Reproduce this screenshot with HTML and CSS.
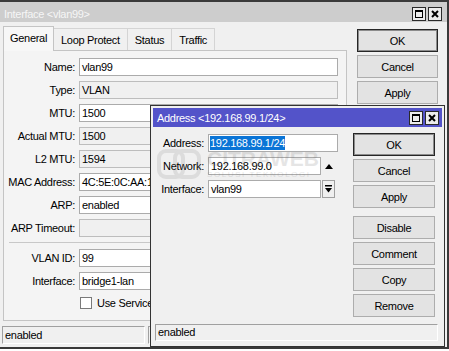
FILE: index.html
```html
<!DOCTYPE html>
<html lang="en">
<head>
    <meta charset="UTF-8">
    <meta name="viewport" content="width=device-width, initial-scale=1.0">
    <title>Interface &lt;vlan99&gt;</title>
    <link rel="stylesheet" href="styles.css">
</head>
<body>
    <div class="win">
        <div class="titlebar">
            <span class="title">Interface &lt;vlan99&gt;</span>
            <div class="tb-buttons">
                <span class="tb-btn">
                    <svg width="14" height="14" viewBox="0 0 14 14"><rect x="0.5" y="0.5" width="13" height="13" fill="#ececec" stroke="#2a2a2a"/><rect x="3.5" y="3.5" width="7" height="7" fill="none" stroke="#000"/><line x1="3" y1="4" x2="11" y2="4" stroke="#000" stroke-width="2"/></svg>
                </span>
                <span class="tb-btn">
                    <svg width="14" height="14" viewBox="0 0 14 14"><rect x="0.5" y="0.5" width="13" height="13" fill="#ececec" stroke="#2a2a2a"/><path d="M4 4 L10 10 M10 4 L4 10" stroke="#000" stroke-width="2"/></svg>
                </span>
            </div>
        </div>

        <div class="win-body">
            <div class="main">
                <div class="tabs">
                    <div class="tab active">General</div>
                    <div class="tab">Loop Protect</div>
                    <div class="tab">Status</div>
                    <div class="tab">Traffic</div>
                </div>
                <div class="panel">
                    <div class="row"><label>Name:</label><div class="field">vlan99</div></div>
                    <div class="row"><label>Type:</label><div class="field ro">VLAN</div></div>
                    <div class="row"><label>MTU:</label><div class="field">1500</div></div>
                    <div class="row"><label>Actual MTU:</label><div class="field ro">1500</div></div>
                    <div class="row"><label>L2 MTU:</label><div class="field ro">1594</div></div>
                    <div class="row"><label>MAC Address:</label><div class="field">4C:5E:0C:AA:1B:2C</div></div>
                    <div class="row"><label>ARP:</label><div class="field">enabled</div></div>
                    <div class="row"><label>ARP Timeout:</label><div class="field ro"></div></div>
                    <div class="sep"></div>
                    <div class="row"><label>VLAN ID:</label><div class="field">99</div></div>
                    <div class="row"><label>Interface:</label><div class="field">bridge1-lan</div></div>
                    <div class="check-row"><span class="checkbox"></span><span>Use Service Tag</span></div>
                </div>
            </div>
            <div class="side">
                <button class="btn default">OK</button>
                <button class="btn">Cancel</button>
                <button class="btn">Apply</button>
            </div>
        </div>

        <div class="statusbar">
            <div class="status-cell">enabled</div>
            <div class="status-cell"></div>
        </div>
    </div>

    <div class="dialog">
        <div class="dlg-title">
            <span>Address &lt;192.168.99.1/24&gt;</span>
            <div class="tb-buttons">
                <span class="tb-btn">
                    <svg width="14" height="14" viewBox="0 0 14 14"><rect x="0.5" y="0.5" width="13" height="13" fill="#ececec" stroke="#2a2a2a"/><rect x="3.5" y="3.5" width="7" height="7" fill="none" stroke="#000"/><line x1="3" y1="4" x2="11" y2="4" stroke="#000" stroke-width="2"/></svg>
                </span>
                <span class="tb-btn">
                    <svg width="14" height="14" viewBox="0 0 14 14"><rect x="0.5" y="0.5" width="13" height="13" fill="#ececec" stroke="#2a2a2a"/><path d="M4 4 L10 10 M10 4 L4 10" stroke="#000" stroke-width="2"/></svg>
                </span>
            </div>
        </div>

        <div class="dlg-body">
            <div class="dlg-form">
                <div class="row">
                    <label class="dlg-label">Address:</label>
                    <div class="field addr"><span class="sel">192.168.99.1/24</span></div>
                </div>
                <div class="row">
                    <label class="dlg-label">Network:</label>
                    <div class="field short">192.168.99.0</div>
                    <span class="spin">
                        <svg width="8" height="5" viewBox="0 0 8 5"><polygon points="0,5 8,5 4,0" fill="#000"/></svg>
                    </span>
                </div>
                <div class="row">
                    <label class="dlg-label">Interface:</label>
                    <div class="field short">vlan99</div>
                    <span class="dd-btn">
                        <svg width="7" height="8" viewBox="0 0 7 8"><rect x="0" y="0" width="7" height="1.5" fill="#000"/><polygon points="0,3 7,3 3.5,7.5" fill="#000"/></svg>
                    </span>
                </div>
            </div>
            <div class="dlg-side">
                <button class="btn wide default">OK</button>
                <button class="btn wide">Cancel</button>
                <button class="btn wide">Apply</button>
                <button class="btn wide group">Disable</button>
                <button class="btn wide">Comment</button>
                <button class="btn wide">Copy</button>
                <button class="btn wide">Remove</button>
            </div>
        </div>

        <div class="dlg-status">enabled</div>
    </div>

    <!-- watermark from the screenshot source -->
    <div class="watermark">
        <svg width="44" height="30" viewBox="0 0 44 30"><rect x="2" y="2" width="24" height="26" rx="7" fill="none" stroke="#777" stroke-width="4"/><rect x="18" y="2" width="24" height="26" rx="7" fill="none" stroke="#777" stroke-width="4"/></svg>
        <div class="wm-text">
            <div class="wm-big">CITRAWEB</div>
            <div class="wm-small">SOLUSI TEKNOLOGI</div>
        </div>
    </div>
</body>
</html>
```

FILE: styles.css
```css
body {
    margin: 0;
    background-color: #fff;
    font-family: "Liberation Sans", Arial, sans-serif;
    font-size: 11px;
    letter-spacing: -0.3px;
    color: #000;
}
.win {
    position: relative;
    width: 449px;
    height: 349px;
    box-sizing: border-box;
    border-top: 2px solid #3a3a3a;
    border-right: 2px solid #3a3a3a;
    border-bottom: 2px solid #3a3a3a;
    background-color: #f0f0f0;
    display: flex;
    flex-direction: column;
}
.titlebar {
    height: 20px;
    flex: none;
    box-sizing: border-box;
    background-color: #cdcdcd;
    color: #f6f6f6;
    display: flex;
    align-items: flex-end;
    justify-content: space-between;
    padding: 0 5px 1px 4px;
}
.title {
    line-height: 14px;
}
.tb-buttons {
    display: flex;
    gap: 2px;
}
.tb-btn {
    display: block;
    width: 14px;
    height: 14px;
}
.tb-btn svg {
    display: block;
}
.win-body {
    display: flex;
    padding: 4px 0 0 3px;
}
.main {
    width: 344px;
}
.tabs {
    display: flex;
    align-items: flex-end;
    height: 24px;
}
.tab {
    height: 22px;
    box-sizing: border-box;
    border: 1px solid #d4d4d4;
    border-bottom: none;
    margin-right: -1px;
    padding: 0 7px;
    display: flex;
    align-items: center;
    background-color: #f0f0f0;
}
.tab.active {
    position: relative;
    height: 25px;
    margin-bottom: -1px;
    padding: 0 6px 2px;
    background-color: #f7f7f7;
    border-color: #c4c4c4;
    z-index: 1;
}
.panel {
    box-sizing: border-box;
    height: 271px;
    border: 1px solid #c4c4c4;
    background-color: #f4f4f4;
    padding-top: 7px;
}
.row {
    display: flex;
    align-items: center;
    height: 18px;
    margin-bottom: 5px;
}
.row label {
    flex: none;
    width: 71px;
    margin-right: 4px;
    text-align: right;
}
.field {
    flex: none;
    width: 259px;
    height: 18px;
    box-sizing: border-box;
    border: 1px solid #ababab;
    background-color: #fff;
    padding: 0 2px;
    line-height: 16px;
    white-space: nowrap;
    overflow: hidden;
}
.field.ro {
    background-color: #f0f0f0;
    border-color: #bdbdbd;
}
.sep {
    height: 1px;
    background-color: #c8c8c8;
    margin: 0 0 6px 5px;
}
.check-row {
    display: flex;
    align-items: center;
    height: 16px;
    padding-left: 76px;
}
.checkbox {
    width: 12px;
    height: 12px;
    box-sizing: border-box;
    border: 1px solid #7a7a7a;
    background-color: #fff;
    margin-right: 5px;
}
.side {
    margin-left: 10px;
    padding-top: 3px;
    display: flex;
    flex-direction: column;
    gap: 3px;
}
.btn {
    width: 81px;
    height: 23px;
    box-sizing: border-box;
    border: 1px solid #adadad;
    background-color: #e3e3e3;
    font-family: inherit;
    font-size: 11px;
    letter-spacing: -0.3px;
    color: #000;
    padding: 0;
}
.btn.default {
    border-color: #262626;
    box-shadow: inset 0 0 0 1px #8c8c8c;
}
.btn.wide {
    width: 82px;
}
.btn.group {
    margin-top: 5px;
}
.statusbar {
    display: flex;
    gap: 3px;
    margin-top: 5px;
    padding-left: 2px;
}
.status-cell {
    width: 143px;
    height: 18px;
    box-sizing: border-box;
    border: 1px solid;
    border-color: #a0a0a0 #fff #fff #a0a0a0;
    padding: 0 2px;
    line-height: 17px;
}

/* address dialog, floating over the interface window */
.dialog {
    position: absolute;
    left: 150px;
    top: 105px;
    width: 295px;
    height: 242px;
    box-sizing: border-box;
    border: 1px solid #333;
    padding: 2px;
    background-color: #f0f0f0;
    display: flex;
    flex-direction: column;
}
.dlg-title {
    height: 19px;
    flex: none;
    background-color: #5353c9;
    color: #fff;
    display: flex;
    align-items: center;
    justify-content: space-between;
    padding: 0 3px 0 4px;
}
.dlg-body {
    flex: 1;
    display: flex;
    padding-top: 6px;
}
.dlg-form {
    width: 200px;
    padding-top: 1px;
}
.row .dlg-label {
    width: 51px;
}
.field.addr {
    width: 130px;
    padding-left: 1px;
}
.field.short {
    width: 113px;
}
.sel {
    display: inline-block;
    height: 14px;
    line-height: 14px;
    margin-top: 1px;
    vertical-align: top;
    background-color: #0a74d6;
    color: #fff;
}
.spin {
    width: 14px;
    margin-left: 1px;
    display: flex;
    justify-content: center;
    align-items: center;
}
.dd-btn {
    width: 13px;
    height: 18px;
    box-sizing: border-box;
    margin-left: 1px;
    border: 1px solid #a0a0a0;
    background-color: #f0f0f0;
    display: flex;
    justify-content: center;
    align-items: center;
}
.dd-btn svg,
.spin svg {
    display: block;
}
.dlg-side {
    display: flex;
    flex-direction: column;
    gap: 3px;
}
.dlg-status {
    height: 17px;
    flex: none;
    box-sizing: border-box;
    margin: 0 4px 3px 2px;
    border: 1px solid;
    border-color: #a0a0a0 #fff #fff #a0a0a0;
    padding: 0 2px;
    line-height: 15px;
}
.watermark {
    position: absolute;
    left: 157px;
    top: 148px;
    display: flex;
    align-items: center;
    gap: 6px;
    opacity: 0.16;
    pointer-events: none;
}
.wm-text {
    color: #666;
    letter-spacing: 0;
}
.wm-big {
    font-size: 21px;
    font-weight: bold;
    line-height: 22px;
}
.wm-small {
    font-size: 8px;
    letter-spacing: 1.6px;
    line-height: 9px;
}
```
